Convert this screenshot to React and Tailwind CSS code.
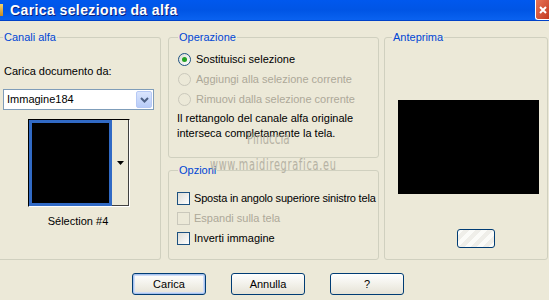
import React from "react";

const F = { fontFamily: '"Liberation Sans", Arial, sans-serif' };

function Radio({ checked, disabled }) {
  return (
    <span
      className={`flex h-[13px] w-[13px] shrink-0 items-center justify-center rounded-full border ${
        disabled ? "border-[#cac8bb] bg-[#ece9d8]" : "border-[#1c5180] bg-gradient-to-br from-[#dcdcd6] to-white"
      }`}
    >
      {checked && <span className="h-[5px] w-[5px] rounded-full bg-[#21a121]" />}
    </span>
  );
}

function Check({ disabled }) {
  return (
    <span
      className={`h-[13px] w-[13px] shrink-0 border ${
        disabled ? "border-[#cac8bb] bg-[#ece9d8]" : "border-[#1c5180] bg-gradient-to-br from-[#dcdcd6] to-white"
      }`}
    />
  );
}

function Group({ label, className, labelLeft, children }) {
  return (
    <div className={`relative rounded-[3px] border border-[#d0d0bf] ${className}`}>
      <span
        className={`absolute top-[-8px] ${labelLeft} bg-[#ece9d8] px-[1px] text-[11px] leading-[14px] text-[#0046d5]`}
      >
        {label}
      </span>
      {children}
    </div>
  );
}

function Btn({ children, def }) {
  return (
    <button
      className={`flex h-[22px] w-[74px] items-center justify-center rounded-[3px] border border-[#003c74] bg-gradient-to-b from-white to-[#e6e3d6] text-[11px] text-black ${
        def ? "shadow-[inset_0_0_0_1px_#a7c2ee,inset_0_0_0_2px_#cedcf6]" : ""
      }`}
    >
      {children}
    </button>
  );
}

export default function App() {
  return (
    <div className="relative h-[300px] w-[549px] overflow-hidden bg-[#ece9d8]" style={F}>
      {/* Title bar */}
      <div className="flex h-[21px] items-center justify-between bg-gradient-to-b from-[#0058ee] via-[#0055e5] to-[#0a62f0] border-b border-[#0042c8]">
        <div className="flex items-center">
          <span className="h-[12px] w-[3px] bg-gradient-to-b from-[#f3d36b] to-[#c98b1c]" />
          <span className="ml-[7px] text-[14px] font-bold leading-none tracking-[0.4px] text-white [text-shadow:1px_1px_0_#0a1f80]">
            Carica selezione da alfa
          </span>
        </div>
        <div className="flex h-[20px] w-[14px] items-center justify-center self-start rounded-bl-[3px] border-b border-l border-white bg-gradient-to-br from-[#e87458] to-[#c3381c]">
          <svg width="10" height="10" viewBox="0 0 10 10">
            <path d="M2 2 L8 8 M8 2 L2 8" stroke="white" strokeWidth="2" />
          </svg>
        </div>
      </div>

      {/* Body */}
      <div className="pt-[16px]">
        <div className="flex items-start">
          {/* Left group */}
          <Group label="Canali alfa" labelLeft="left-[3px]" className="h-[223px] w-[161px] rounded-l-none border-l-0">
            <div className="flex flex-col">
              <div className="ml-[4px] mt-[26px] text-[11px] leading-[14px] text-black">Carica documento da:</div>
              <div className="ml-[3px] mt-[11px] flex h-[21px] w-[151px] items-center border border-[#7f9db9] bg-white">
                <span className="ml-[3px] flex-1 text-[11px] text-black">Immagine184</span>
                <span className="mr-[1px] flex h-[17px] w-[16px] items-center justify-center rounded-[2px] border border-[#b6c9f5] bg-gradient-to-b from-[#dae5fd] to-[#b8ccf8]">
                  <svg width="9" height="6" viewBox="0 0 9 6">
                    <path d="M1 1 L4.5 4.5 L8 1" stroke="#4d6185" strokeWidth="2" fill="none" />
                  </svg>
                </span>
              </div>
              <div className="ml-[28px] mt-[9px] flex h-[88px] w-[102px] border border-t-black border-l-black border-r-white border-b-white bg-white">
                <div className="h-full w-[83px] border-[3px] border-[#316ac5] bg-black" />
                <div className="flex flex-1 items-center justify-center border-b border-r border-[#404040] bg-[#ece9d8]">
                  <svg width="7" height="4" viewBox="0 0 7 4">
                    <path d="M0 0 H7 L3.5 4 Z" fill="black" />
                  </svg>
                </div>
              </div>
              <div className="mt-[7px] pr-[4px] text-center text-[11px] leading-[14px] text-black">Sélection #4</div>
            </div>
          </Group>

          {/* Middle column */}
          <div className="ml-[7px] flex w-[211px] flex-col">
            <Group label="Operazione" labelLeft="left-[9px]" className="h-[121px]">
              <div className="ml-[9px] mt-[15px] flex flex-col gap-[7px] text-[11px] leading-[13px]">
                <div className="flex items-center gap-[5px] text-black">
                  <Radio checked />
                  <span>Sostituisci selezione</span>
                </div>
                <div className="flex items-center gap-[5px] text-[#aca899]">
                  <Radio disabled />
                  <span>Aggiungi alla selezione corrente</span>
                </div>
                <div className="flex items-center gap-[5px] text-[#aca899]">
                  <Radio disabled />
                  <span>Rimuovi dalla selezione corrente</span>
                </div>
              </div>
              <div className="ml-[8px] mt-[5px] text-[11px] leading-[15px] text-black">
                Il rettangolo del canale alfa originale
                <br />
                interseca completamente la tela.
              </div>
            </Group>
            <Group label="Opzioni" labelLeft="left-[9px]" className="mt-[12px] h-[90px]">
              <div className="ml-[8px] mt-[20px] flex flex-col gap-[6px] whitespace-nowrap text-[11px] leading-[14px]">
                <div className="flex items-center gap-[4px] text-black">
                  <Check />
                  <span className="tracking-[-0.2px]">Sposta in angolo superiore sinistro tela</span>
                </div>
                <div className="flex items-center gap-[4px] text-[#aca899]">
                  <Check disabled />
                  <span>Espandi sulla tela</span>
                </div>
                <div className="flex items-center gap-[4px] text-black">
                  <Check />
                  <span>Inverti immagine</span>
                </div>
              </div>
            </Group>
          </div>

          {/* Right group */}
          <Group label="Anteprima" labelLeft="left-[7px]" className="ml-[5px] h-[223px] w-[164px]">
            <div className="flex flex-col">
              <div className="ml-[13px] mt-[62px] h-[94px] w-[141px] bg-black" />
              <div className="ml-[72px] mt-[35px] h-[19px] w-[38px] rounded-[3px] border border-[#003c74] bg-[linear-gradient(135deg,#fbfbf8_25%,#efeee9_25%,#efeee9_50%,#fbfbf8_50%,#fbfbf8_75%,#efeee9_75%)] bg-[length:12px_12px]" />
            </div>
          </Group>
        </div>

        {/* Buttons */}
        <div className="ml-[132px] mt-[13px] flex gap-[25px]">
          <Btn def>Carica</Btn>
          <Btn>Annulla</Btn>
          <Btn>?</Btn>
        </div>
      </div>

      {/* Watermark */}
      <div
        className="pointer-events-none absolute left-[247px] top-[131px] text-[16px] leading-[16px] text-[#a9a597] opacity-80"
        style={{ fontFamily: '"DejaVu Sans Condensed", "DejaVu Sans", sans-serif', transform: "scaleX(0.72)", transformOrigin: "left" }}
      >
        Pinuccia
      </div>
      <div
        className="pointer-events-none absolute left-[210px] top-[157px] text-[15px] leading-[16px] tracking-[1px] text-[#a9a597] opacity-80"
        style={{ fontFamily: '"DejaVu Sans Condensed", "DejaVu Sans", sans-serif', transform: "scaleX(0.72)", transformOrigin: "left" }}
      >
        www.maidiregrafica.eu
      </div>
    </div>
  );
}
